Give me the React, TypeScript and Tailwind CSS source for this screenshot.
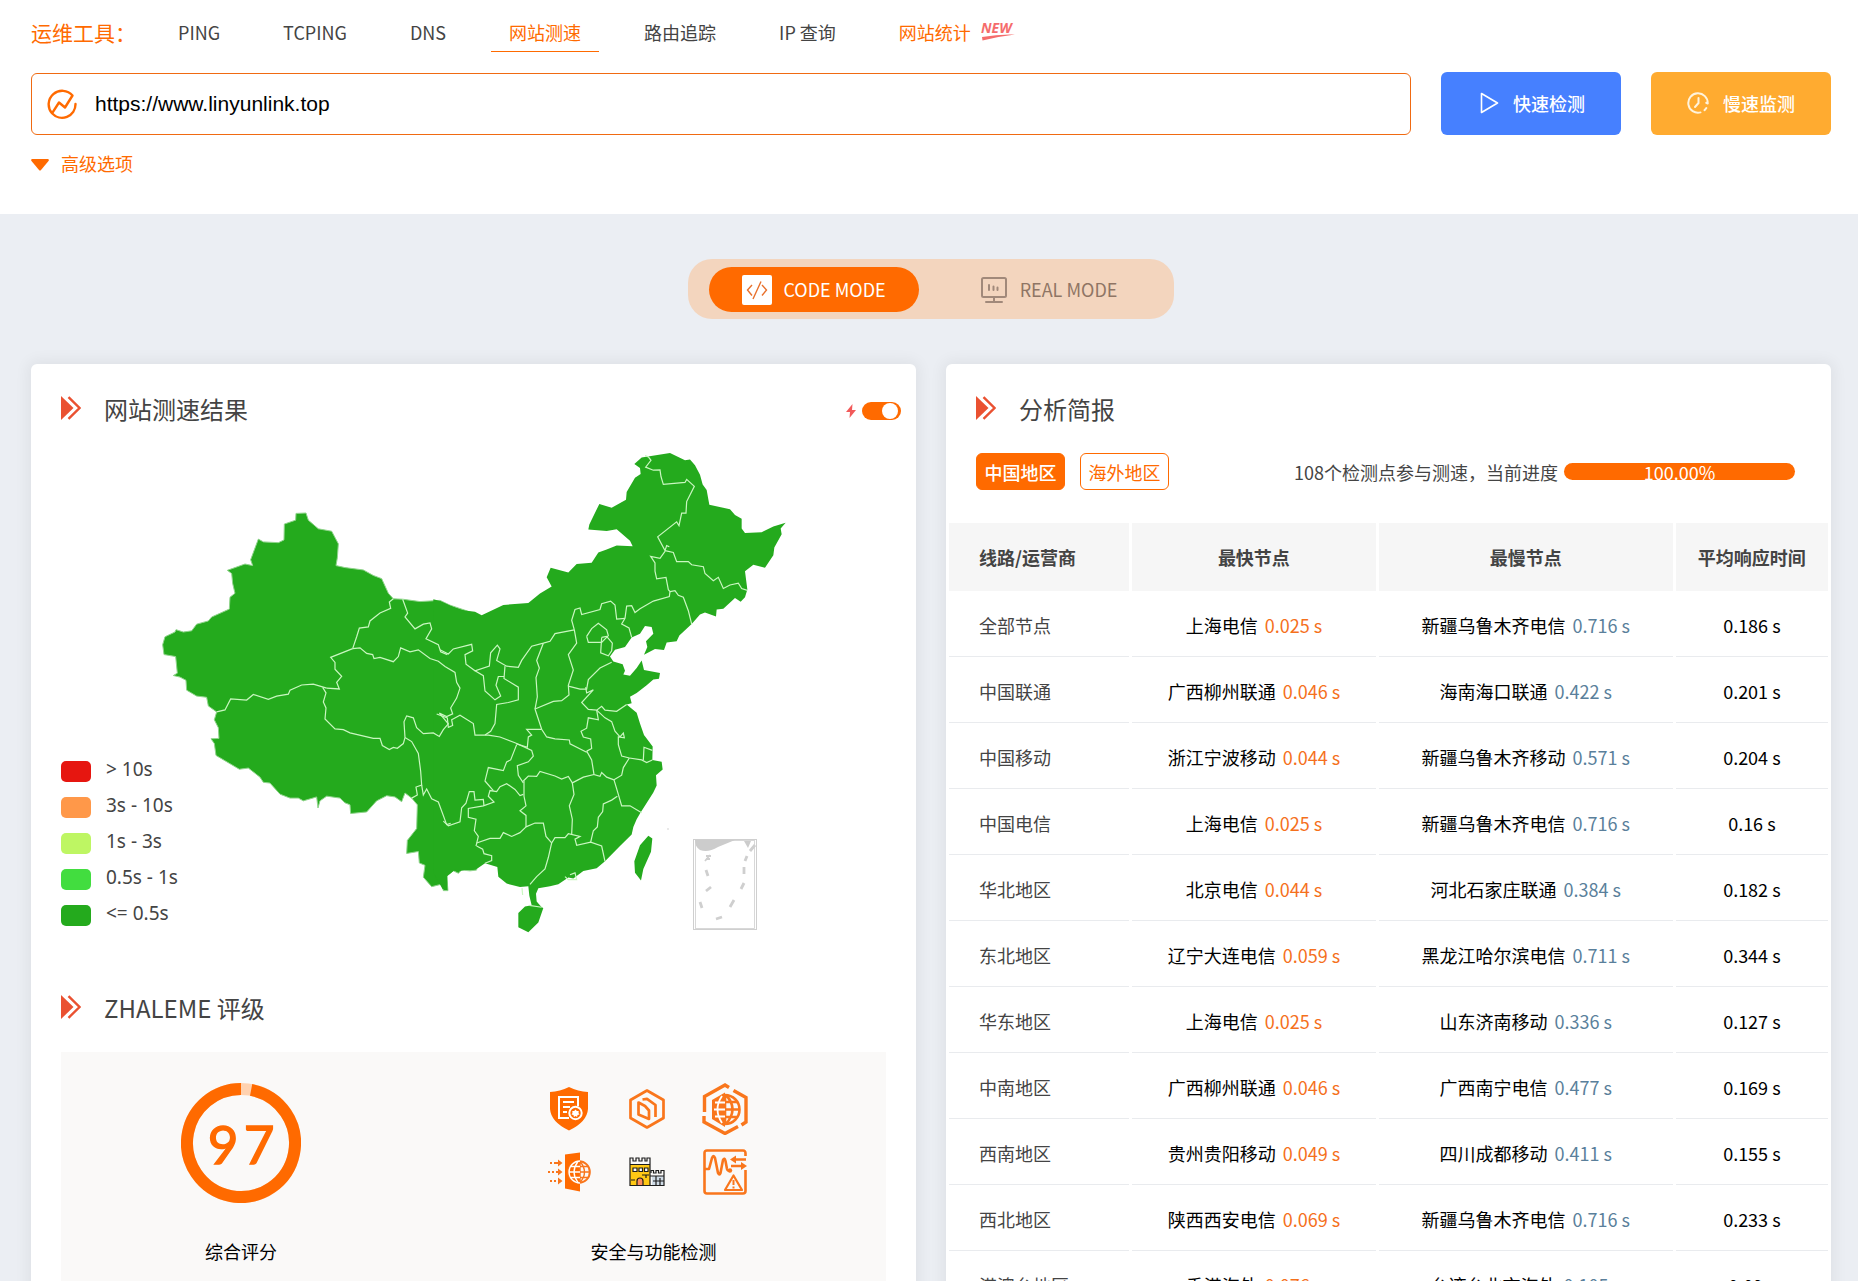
import React, { useState } from 'react';

interface NavItem {
  label: string;
  active?: boolean;
  hot?: boolean;
}

interface ReportRow {
  line: string;
  fast: string;
  fastTime: string;
  slow: string;
  slowTime: string;
  avg: string;
}

const NAV_ITEMS: NavItem[] = [
  { label: 'PING' },
  { label: 'TCPING' },
  { label: 'DNS' },
  { label: '网站测速', active: true },
  { label: '路由追踪' },
  { label: 'IP 查询' },
  { label: '网站统计', hot: true },
];

const LEGEND = [
  { label: '> 10s', color: 'bg-[#e61610]' },
  { label: '3s - 10s', color: 'bg-[#ff9849]' },
  { label: '1s - 3s', color: 'bg-[#bef663]' },
  { label: '0.5s - 1s', color: 'bg-[#42dd3f]' },
  { label: '<= 0.5s', color: 'bg-[#24aa1d]' },
];

const ROWS: ReportRow[] = [
  { line: '全部节点', fast: '上海电信', fastTime: '0.025 s', slow: '新疆乌鲁木齐电信', slowTime: '0.716 s', avg: '0.186 s' },
  { line: '中国联通', fast: '广西柳州联通', fastTime: '0.046 s', slow: '海南海口联通', slowTime: '0.422 s', avg: '0.201 s' },
  { line: '中国移动', fast: '浙江宁波移动', fastTime: '0.044 s', slow: '新疆乌鲁木齐移动', slowTime: '0.571 s', avg: '0.204 s' },
  { line: '中国电信', fast: '上海电信', fastTime: '0.025 s', slow: '新疆乌鲁木齐电信', slowTime: '0.716 s', avg: '0.16 s' },
  { line: '华北地区', fast: '北京电信', fastTime: '0.044 s', slow: '河北石家庄联通', slowTime: '0.384 s', avg: '0.182 s' },
  { line: '东北地区', fast: '辽宁大连电信', fastTime: '0.059 s', slow: '黑龙江哈尔滨电信', slowTime: '0.711 s', avg: '0.344 s' },
  { line: '华东地区', fast: '上海电信', fastTime: '0.025 s', slow: '山东济南移动', slowTime: '0.336 s', avg: '0.127 s' },
  { line: '中南地区', fast: '广西柳州联通', fastTime: '0.046 s', slow: '广西南宁电信', slowTime: '0.477 s', avg: '0.169 s' },
  { line: '西南地区', fast: '贵州贵阳移动', fastTime: '0.049 s', slow: '四川成都移动', slowTime: '0.411 s', avg: '0.155 s' },
  { line: '西北地区', fast: '陕西西安电信', fastTime: '0.069 s', slow: '新疆乌鲁木齐电信', slowTime: '0.716 s', avg: '0.233 s' },
  { line: '港澳台地区', fast: '香港海外', fastTime: '0.076 s', slow: '台湾台北市海外', slowTime: '0.105 s', avg: '0.09 s' },
];

// Province borders, split in a western and an eastern sheet
const WEST_LAND =
  '398,720 405,700 435,688 438,682 460,688 485,685 500,668 535,660 545,650 598,630 600,600 615,590 608,565 605,540 592,532 645,516 668,520 662,505 685,453 700,460 745,462 762,455 763,415 797,405 798,388 828,387 835,405 865,427 905,433 925,465 922,500 918,520 945,525 1000,531 1030,545 1055,553 1075,590 1090,604 1118,605 1170,611 1230,608 1260,620 1330,640 1340,1290 1320,1292 1295,1290 1285,1298 1270,1292 1250,1305 1254,1342 1240,1342 1238,1325 1205,1332 1180,1308 1185,1278 1168,1272 1165,1243 1130,1248 1132,1215 1160,1185 1162,1125 1145,1108 1125,1095 1115,1117 1095,1105 1070,1102 1040,1115 1010,1143 962,1147 960,1125 945,1120 930,1108 890,1103 870,1115 864,1133 860,1105 820,1115 805,1108 780,1108 750,1098 720,1070 700,1068 690,1055 655,1032 628,1035 558,1000 553,970 543,958 567,957 565,930 553,910 560,890 535,875 530,853 500,850 470,835 468,810 450,802 430,798 442,792 437,750 402,745';

const WEST_BORDERS = [
  '1090,604 1078,612 1082,628 1050,640 1020,660 1015,675 988,678 980,700 968,730',
  '968,730 902,752 915,765 915,782 935,800 920,815 928,832 890,830',
  '890,830 850,820 815,822 780,835 775,845 740,850 715,858 670,846 650,860 602,857 585,885 560,890',
  '878,828 888,842 880,865 888,880 885,908 915,933 940,935 960,943 1030,957 1050,957 1057,975 1078,985 1090,980 1102,982 1120,970 1125,955',
  '968,730 990,728 1010,742 1028,745 1032,755 1050,752 1090,763 1105,750 1112,728 1140,738 1165,733 1200,755 1225,762 1245,775 1275,790 1280,815 1290,830 1280,855 1262,880 1268,895 1250,902 1228,893 1255,920 1240,935 1228,952 1210,943 1180,945 1160,930 1150,905 1130,900 1122,915 1125,955',
  '1125,955 1145,965 1165,995 1172,1040 1175,1075 1158,1080 1162,1100 1145,1108',
  '1175,1075 1180,1100 1190,1085 1205,1110 1225,1118 1250,1175 1262,1172',
  '1118,605 1133,640 1125,650 1155,680 1180,668 1200,665 1205,680 1188,705 1225,720 1232,738 1252,745',
];

const EAST_LAND =
  '-20,625 0,630 60,653 105,658 125,667 190,640 265,635 300,610 335,592 320,568 332,543 385,555 410,533 455,530 475,503 500,495 530,485 578,487 570,472 530,442 500,447 445,443 448,430 478,376 515,386 558,365 560,345 585,308 602,298 600,282 583,272 605,255 690,243 735,262 750,260 765,275 780,300 788,325 800,340 808,378 870,390 885,405 905,415 905,440 915,452 965,450 1000,435 1037,425 1022,440 1025,455 1003,490 1000,510 975,543 940,535 915,552 922,600 915,620 902,632 885,622 850,650 830,652 828,670 795,660 780,665 755,690 718,720 710,735 680,738 672,758 645,755 612,770 622,750 618,735 640,715 635,698 615,695 600,715 575,725 555,750 525,757 510,775 520,788 548,795 555,812 550,822 570,825 590,805 605,785 612,810 660,818 657,833 640,835 620,850 590,870 570,880 575,897 560,900 590,922 600,950 612,980 638,1010 637,1045 665,1050 668,1070 648,1085 650,1112 640,1130 600,1185 590,1200 580,1220 575,1240 540,1270 495,1310 470,1328 430,1335 400,1355 385,1352 355,1370 330,1375 295,1380 288,1395 290,1415 305,1430 310,1432 295,1470 265,1495 235,1482 235,1445 255,1428 275,1425 268,1400 265,1375 240,1377 200,1368 175,1350 172,1325 135,1315 110,1330 95,1328 60,1335 45,1332 22,1348 22,1385 8,1383 -20,1340';

const EAST_BORDERS = [
  '615,250 625,253 633,262 617,280 640,288 660,287 663,305 670,325 735,320 740,312 763,330 740,370 738,400 725,400 717,433 710,423 653,462 675,498 680,485 688,488',
  '675,498 700,503 710,527 745,527 755,535 790,540 795,558 820,577 835,568 850,597 870,588 895,583 905,597 922,602',
  '675,500 660,518 632,513 645,530 645,552 650,572 678,568 685,600 690,605',
  '690,605 705,603 715,615 730,620 745,655 755,690',
  '690,605 688,618 640,630 600,650 585,660 575,642 560,643 555,675 545,690 567,700 575,725',
  '555,675 530,677 525,640 512,630 485,637 480,652 425,665 420,648 405,652 395,680 403,705',
  '0,757 25,768 40,755 95,743 98,760 75,770 78,795 105,812 148,800 152,765 172,745 180,755 170,785 200,800 235,803 245,785 275,748 310,740 330,735 345,715 403,705',
  '440,722 455,702 475,688 500,705 505,720 485,738 445,738 440,722',
  '485,725 500,722 517,740 515,760 505,773 482,765 485,725',
  '310,740 290,785 298,805 288,830 292,880 285,912',
  '403,705 410,740 385,770 400,810 385,850 387,875 365,890 340,892 285,912',
  '385,852 420,860 440,860 445,835 480,805 515,790',
  '437,855 440,870 460,862 425,895 445,913 470,915 485,905 495,915 530,918 560,900',
  '285,912 305,965 320,985 345,990 388,993 390,1003 440,1025',
  '470,915 475,940 445,935 440,962 423,970 430,985 452,990 455,1015 440,1022',
  '470,915 495,935 515,945 525,970 540,985 550,975 553,987 535,985 535,1005 545,1035 568,1040',
  '568,1040 605,1045 620,1052 637,1045',
  '610,1045 612,1012 637,1020',
  '568,1040 550,1065 545,1085 522,1097',
  '440,1022 455,1045 462,1083 480,1088 485,1078 500,1090 522,1097',
  '522,1097 535,1135 545,1165 570,1165 605,1183',
  '532,1140 515,1150 490,1160 488,1180 475,1195 472,1220 460,1230 452,1260',
  '250,1100 265,1087 290,1088 300,1075 345,1087 365,1095 385,1088 397,1105 430,1090 462,1083',
  '397,1105 402,1135 388,1165 397,1200 395,1240',
  '335,1262 345,1248 375,1248 385,1238 420,1245 405,1252 410,1268 452,1260 485,1270 495,1310',
  '335,1262 325,1300 315,1330 290,1350 270,1370',
  '258,1220 285,1210 310,1210 318,1245 335,1262',
  '252,1100 252,1140 258,1165 240,1178 258,1190 258,1220',
  '258,1220 240,1235 215,1245 190,1235 180,1250 150,1250 110,1262',
  '108,1270 115,1245 103,1230 108,1200 85,1195 85,1172 130,1165 162,1155 145,1140 150,1125 170,1128 180,1115 200,1107 225,1122 240,1138 250,1135',
  '110,1270 128,1278 132,1290 155,1295 155,1308 135,1315',
  '160,1125 135,1100 145,1065 190,1073 200,1050 212,1045 230,1005',
  '225,1000 275,1020 280,1035 265,1050 232,1060 235,1085 250,1105',
  '230,1003 262,1012 265,985 275,980 260,965 305,965',
  '-10,925 22,935 25,960 38,955 35,940 60,928 100,950 105,980 145,980 180,985 225,1000',
  '135,980 152,970 165,950 170,900 205,895 235,888 235,855 192,832 195,800',
  '105,812 130,825 135,865 165,888 182,878 168,850 175,827 192,827',
  '10,1205 25,1217 60,1207 65,1170 78,1158 88,1128 102,1128 105,1150 130,1148 132,1165',
  '375,1350 385,1358 410,1358 405,1340 390,1345',
  '246,1380 248,1398',
];

const ArrowIcon: React.FC = () => (
  <svg className="w-5 h-6 shrink-0" viewBox="0 0 20 24" aria-hidden="true">
    <path d="M0 0 L12.5 12 L0 24 Z" fill="#ea5131" />
    <path d="M7.5 1.2 L18.5 12 L7.5 22.8" fill="none" stroke="#ea5131" strokeWidth="2.4" />
  </svg>
);

const SectionTitle: React.FC<{ children: React.ReactNode }> = ({ children }) => (
  <div className="flex items-start gap-[23px] h-9">
    <div className="pt-1">
      <ArrowIcon />
    </div>
    <h2 className="text-2xl leading-[34px] text-[#444]">{children}</h2>
  </div>
);

const NewBadge: React.FC = () => (
  <svg className="w-9 h-5 mb-1 overflow-visible" viewBox="0 0 36 20" role="img" aria-label="NEW">
    <text x="0" y="12" fontFamily="Open Sans, sans-serif" fontSize="14" fontWeight="700" fontStyle="italic" fill="#f56c6c">NEW</text>
    <path d="M1 16 Q18 13 34 13.6 Q18 15.5 1.5 19.5 Z" fill="#f56c6c" />
  </svg>
);

const ChinaMap: React.FC = () => (
  <svg className="block w-full" viewBox="31 440 885 500" role="img" aria-label="中国地图">
    <g transform="translate(30 360) scale(0.33333 0.3954)" fill="#24aa1d">
      <polygon points={WEST_LAND} stroke="#8fd48b" strokeWidth="1" vectorEffect="non-scaling-stroke" />
    </g>
    <g transform="translate(440 360) scale(0.33333 0.3827)" fill="#24aa1d">
      <polygon points={EAST_LAND} />
      <polygon points="625,1243 637,1250 633,1285 610,1330 603,1360 585,1340 583,1310 600,1268" />
      <g fill="none" stroke="#c9f7c0" strokeWidth="1.2">
        {EAST_BORDERS.map((b) => (
          <polyline key={b} points={b} vectorEffect="non-scaling-stroke" />
        ))}
        <path d="M268 1425 L305 1430" vectorEffect="non-scaling-stroke" />
      </g>
    </g>
    <g transform="translate(30 360) scale(0.33333 0.3954)" fill="none" stroke="#c9f7c0" strokeWidth="1.2">
      {WEST_BORDERS.map((b) => (
        <polyline key={b} points={b} vectorEffect="non-scaling-stroke" />
      ))}
    </g>
    <circle cx="668" cy="829" r="0.8" fill="#ccc" />
    {/* South China Sea inset */}
    <g fill="none" stroke="#cfcfcf">
      <rect x="693.5" y="839.5" width="63" height="90" />
      <rect x="695.5" y="840.5" width="59" height="88" strokeWidth="0.8" />
      <path d="M695 840 H735 L718 847 Q708 853 700 850 Q695 847 695 840 Z M744 841 h7 l-3 7 z" fill="#cccccc" stroke="none" />
      <path d="M705 861 l5 -6 m-4 1 l5 0 m-5 3 l4 0" strokeWidth="1.8" />
      <path d="M755 845 l-5 6 M747 856 l-2 5 M744 867 v7 M744 883 l-3 6 M734 900 l-4 7 M722 917 l-6 2 M702 908 l-2 -6 M706 891 l5 -4 M706 870 l2 6" strokeWidth="2.8" />
    </g>
  </svg>
);

const ShieldIcon: React.FC = () => (
  <svg className="w-10 h-11" viewBox="0 0 40 44" aria-hidden="true">
    <path d="M20 0 Q29 4.5 39 5 L39 22 Q38 35 20 43.5 Q2 35 1 22 L1 5 Q11 4.5 20 0 Z" fill="#ff6a00" />
    <g fill="none" stroke="#fff" strokeWidth="2">
      <path d="M20 31 H10 V10 H29 V19" />
      <path d="M14 15 H25 M14 20 H21 M14 25 H18" />
      <circle cx="26.5" cy="26" r="6.2" fill="#ff6a00" />
    </g>
    <path d="M26.5 22.5 l1.3 1.4 1.9 .1 -.2 2 1 1.6 -2 .4 -.4 2 -1.600 -1 -1.600 1 -.4 -2 -2 -.4 1 -1.600 -.2 -2 1.900 -.1 z" fill="#fff" />
  </svg>
);

const HexIcon: React.FC = () => (
  <svg className="w-9 h-10" viewBox="0 0 36 40" fill="none" stroke="#f9761c" strokeWidth="2.7" strokeLinejoin="round" aria-hidden="true">
    <path d="M18 1.5 L34.5 11 V29 L18 38.5 L1.5 29 V11 Z" />
    <path d="M9.5 13.5 L16 17 L20 21.5 V30 L9.5 25.5 Z" />
    <path d="M13.5 10.5 L18 9.8 L26.5 16 V28" />
  </svg>
);

const GlobeHexIcon: React.FC = () => (
  <svg className="w-[46px] h-[52px]" viewBox="0 0 46 52" fill="none" stroke="#f9761c" aria-hidden="true">
    <path d="M27 4.5 L23 2 L2.5 13.5 V29 M31.5 7.5 L44 14.5 V39 L39.5 42 M2 33 V39 L23 50.5 L36 43.5" strokeWidth="3.4" />
    <path d="M23 9.5 L10 17 V36 L23 44 Z" fill="#f9761c" stroke="none" />
    <path d="M23 12 A14.5 14.5 0 0 1 23 41" strokeWidth="2.6" />
    <path d="M23 12 V41 M23 26.5 H37 M23 19 H35 M23 34 H35 M24 12 Q37 26 24 41" strokeWidth="2.6" />
    <path d="M12 26.5 H23 M13 19.5 H23 M13 33.5 H23 M20 13 Q11 26 20 40" stroke="#fff" strokeWidth="1.8" />
  </svg>
);

const DoorGlobeIcon: React.FC = () => (
  <svg className="w-11 h-10" viewBox="0 0 44 40" fill="none" stroke="#f9761c" aria-hidden="true">
    <path d="M18 2.5 L33 .5 V39.5 L18 36.5 Z" fill="#ff6a00" stroke="none" />
    <circle cx="32" cy="20" r="10.8" strokeWidth="2" />
    <path d="M33 9.5 V30.5 M33 20 H43 M33 14.5 H41 M33 25.5 H41 M33 9.5 Q42 20 33 30.5" strokeWidth="1.4" />
    <path d="M33 9 A11 11 0 0 0 33 31 M21.5 20 H33 M23.5 14.5 H33 M23.5 25.5 H33 M31 9.5 Q23 20 31 30.5" stroke="#fff" strokeWidth="1.3" />
    <path d="M3 11 h2 m2 0 h6 M1 20 h2 m2 0 h2 m2 0 h4 M3 29 h2 m2 0 h2 m2 0 h2" strokeWidth="2" />
    <path d="M11 7.5 l4.5 3.5 -4.5 3.500 z M11 16.500 l4.500 3.500 -4.500 3.500 z M11 25.500 l4.500 3.500 -4.500 3.500 z" fill="#f9761c" stroke="none" />
  </svg>
);

const CastleIcon: React.FC = () => (
  <svg className="w-9 h-[30px]" viewBox="0 0 36 30" fill="none" stroke="#1d1d1d" strokeWidth="1.2" aria-hidden="true">
    <path d="M1 8 H21 V28.5 H1 Z" fill="#ffc814" stroke="none" />
    <path d="M1 28.5 V1 H4 V4 H7 V1 H10 V4 H13 V1 H16 V4 H18 V1 H21 V28.5 Z M1 7.5 H21" />
    <path d="M4 11 h4 v3.5 h-4 z M10 11 h3.5 v3.5 h-3.5 z M15.5 11 h3.5 v3.5 h-3.5 z" fill="#fff" />
    <path d="M8 28.5 V24 Q8 21 11 21 Q14 21 14 24 V28.5 Z" fill="#ff8d5c" />
    <path d="M23 19 H35 V28.5 H23 Z" fill="#cfdbe6" stroke="none" />
    <path d="M21 28.5 H35 V13.5 H32 V16 H29.5 V13.5 H27 V16 H24.5 V13.5 H22 V16 M21 19 H35 M24 24 H35 M27 19 V28 M31 21 V28 M2 23 h4 M13 18 h7 M17 18 v3" />
  </svg>
);

const MonitorAlertIcon: React.FC = () => (
  <svg className="w-11 h-[46px]" viewBox="0 0 44 46" fill="none" stroke="#f9761c" strokeWidth="2.6" aria-hidden="true">
    <path d="M42.5 7 V4.5 Q42.5 1.5 40 1.5 H4 Q1.5 1.5 1.5 4 V42 Q1.5 44.5 4 44.5 H40 Q42.5 44.5 42.5 42 V21" />
    <path d="M2 20 H6 L9 9 Q10.5 5 12 9 L15 24 Q16.500 27 17.500 24 L20 11 Q21.500 8 22.500 12 L24 20 Q24.500 22 27 22" strokeLinejoin="round" />
    <circle cx="27" cy="21.5" r="2.2" fill="#f9761c" stroke="none" />
    <path d="M43 10.5 H30 M28 17 H41" />
    <path d="M33 6.5 L27 10.5 L33 14.5 Z M38 13 L44 17 L38 21 Z" fill="#f9761c" stroke="none" />
    <path d="M30.5 26.5 L39 41 H22 Z" strokeWidth="2.2" strokeLinejoin="round" />
    <path d="M30.5 31 V36 M30.5 37.5 V39.5" strokeWidth="2" />
  </svg>
);

const SECURITY_ICONS = [ShieldIcon, HexIcon, GlobeHexIcon, DoorGlobeIcon, CastleIcon, MonitorAlertIcon];

const ScoreRing: React.FC<{ score: number }> = ({ score }) => (
  <svg className="w-[120px] h-[120px]" viewBox="0 0 120 120" role="img" aria-label={`${score}`}>
    <circle cx="60" cy="60" r="54" fill="none" stroke="#ffd2b0" strokeWidth="12" />
    <circle
      cx="60"
      cy="60"
      r="54"
      fill="none"
      stroke="#ff6a00"
      strokeWidth="12"
      pathLength="100"
      strokeDasharray={`${score} ${100 - score}`}
      transform={`rotate(${-90 + (100 - score) * 3.6} 60 60)`}
    />
    <text y="81" textAnchor="middle" fontFamily="Lato, sans-serif" fontSize="53" fill="#ff6a00" stroke="#ff6a00" strokeWidth="1.4">
      <tspan x="42">{`${score}`[0]}</tspan>
      <tspan x="78">{`${score}`[1]}</tspan>
    </text>
  </svg>
);

const Header: React.FC = () => {
  const [url, setUrl] = useState('https://www.linyunlink.top');

  return (
    <header className="bg-white pl-[31px] pr-[27px] pt-[15px] pb-9">
      <nav className="flex items-start h-[37px] text-lg">
        <span className="text-[21px] leading-[34px] text-[#ff6a00] w-[129px]">运维工具：</span>
        <div className="flex gap-[27px]">
          {NAV_ITEMS.map((item) => (
            <a
              key={item.label}
              href="#"
              className={`flex items-start gap-[10px] h-[37px] px-[18px] border-b leading-[34px] whitespace-nowrap ${
                item.active ? 'border-[#ff6a00]' : 'border-transparent'
              } ${item.active || item.hot ? 'text-[#ff6a00]' : 'text-[#444]'}`}
            >
              {item.label}
              {item.hot && (
                <span className="pt-[6px]">
                  <NewBadge />
                </span>
              )}
            </a>
          ))}
        </div>
      </nav>

      <div className="flex items-end gap-[30px] mt-5">
        <div className="flex-1 flex items-center h-[62px] border border-[#f06a12] rounded-md pl-[15px]">
          <svg className="w-[30px] h-[30px]" viewBox="0 0 30 30" fill="none" stroke="#ff6a00" strokeWidth="2.4" strokeLinecap="round" strokeLinejoin="round" aria-hidden="true">
            <path d="M28.5 15 A13.5 13.5 0 0 1 5 24.3 L12 13.5 L18 18.5 L25.5 6.5 A13.5 13.5 0 1 0 5 24.3" />
          </svg>
          <input
            type="text"
            aria-label="网址"
            value={url}
            onChange={(e) => setUrl(e.target.value)}
            className="flex-1 h-full px-[18px] text-[21px] text-black font-['Liberation_Sans',sans-serif] outline-none"
          />
        </div>
        <button type="button" className="flex items-center justify-center gap-[14px] w-[180px] h-[63px] pb-px pl-[3px] rounded-md bg-[#4680ff] text-white text-lg font-medium">
          <svg className="w-[19px] h-[22px]" viewBox="0 0 19 22" fill="none" stroke="#fff" strokeWidth="1.6" strokeLinejoin="round" aria-hidden="true">
            <path d="M1.500 1.500 L17.500 11 L1.500 20.500 Z" />
          </svg>
          快速检测
        </button>
        <button type="button" className="flex items-center justify-center gap-[14px] w-[180px] h-[63px] pb-px rounded-md bg-[#ffab30] text-white text-lg font-medium">
          <svg className="w-[22px] h-[22px]" viewBox="0 0 22 22" fill="none" stroke="#fff3dc" strokeWidth="2" strokeLinecap="round" aria-hidden="true">
            <path d="M20.700 11.500 A9.700 9.700 0 1 0 13.500 20.400 M20.700 11.500 L19.300 10.800 M19.300 16 A9.700 9.700 0 0 1 17.500 18.200" />
            <path d="M11.500 6 V11 L8 15" />
          </svg>
          慢速监测
        </button>
      </div>

      <button type="button" className="flex items-start gap-3 h-[27px] mt-4 text-lg leading-[25px] text-[#ff6a00]">
        <span className="pt-2">
          <svg className="w-[18px] h-3" viewBox="0 0 18 12" fill="#ff6a00" aria-hidden="true">
            <path d="M1 0 H17 Q18.5 .5 17.5 2 L10 11 Q9 12 8 11 L.5 2 Q-.5 .5 1 0 Z" />
          </svg>
        </span>
        高级选项
      </button>
    </header>
  );
};

const ModeSwitch: React.FC = () => (
  <div className="flex justify-between w-[486px] h-[60px] mx-auto px-[21px] pt-2 rounded-[24px] bg-[#f3d5be] text-lg">
    <button type="button" className="flex items-center justify-center gap-[11px] w-[210px] h-[45px] rounded-full bg-[#ff6a00] text-white">
      <svg className="w-[30px] h-[30px]" viewBox="0 0 30 30" fill="none" stroke="#e8702c" strokeWidth="1.4" aria-hidden="true">
        <rect width="30" height="30" rx="2" fill="#fff" stroke="none" />
        <path d="M10 10 L5.500 15 L10 20.500 M20 10 L24.500 15 L20 20.500 M19 6.500 L11 24" />
      </svg>
      <span className="pb-[2px]">CODE MODE</span>
    </button>
    <button type="button" className="flex items-center justify-center gap-[11px] w-[210px] h-[45px] text-[#8f7565]">
      <svg className="w-[30px] h-[30px]" viewBox="0 0 30 30" fill="none" stroke="#a1897a" strokeWidth="2" strokeLinecap="round" aria-hidden="true">
        <rect x="3" y="3" width="24" height="19" rx="1.500" />
        <path d="M10 10 V15 M14.500 11.500 V15 M18.500 12.500 V15 M15 22.500 V27 M7 27 H23" />
      </svg>
      <span className="pb-[2px]">REAL MODE</span>
    </button>
  </div>
);

const ResultCard: React.FC = () => {
  const [fastMode, setFastMode] = useState(true);

  return (
    <section className="bg-white rounded-md shadow-[0_0_14px_4px_rgba(0,0,0,0.05)] pt-7">
      <div className="flex items-center justify-between pl-[30px] pr-[15px]">
        <SectionTitle>网站测速结果</SectionTitle>
        <label className="flex items-center gap-[6px] pt-[2px]">
          <svg className="w-[10px] h-[14px]" viewBox="0 0 10 14" fill="#f25a5a" aria-hidden="true">
            <path d="M6.5 0 L0 8 H4 L3.5 14 L10 6 H6 Z" />
          </svg>
          <input
            type="checkbox"
            className="peer sr-only"
            aria-label="极速模式"
            checked={fastMode}
            onChange={(e) => setFastMode(e.target.checked)}
          />
          <span className="flex items-center justify-start w-[39px] h-[18px] px-[3px] rounded-full bg-gray-300 peer-checked:justify-end peer-checked:bg-[#ff6a00]">
            <span className="w-4 h-4 rounded-full bg-white"></span>
          </span>
        </label>
      </div>

      <div className="relative mt-3">
        <ChinaMap />
        <ul className="absolute left-[30px] bottom-[7px]">
          {LEGEND.map((item) => (
            <li key={item.label} className="flex items-center h-9">
              <span className={`w-[30px] h-[21px] rounded-[5px] ${item.color}`}></span>
              <span className="pl-[15px] pb-1 text-[19px] leading-7 text-[#444] font-['Noto_Sans',sans-serif]">{item.label}</span>
            </li>
          ))}
        </ul>
      </div>

      <div className="px-[30px] mt-[51px]">
        <SectionTitle>ZHALEME 评级</SectionTitle>
        <div className="grid grid-cols-[360fr_465fr] mt-[25px] bg-[#faf9f8] pt-[31px] pb-12 text-lg text-black">
          <div className="flex flex-col items-center">
            <div className="h-[154px]">
              <ScoreRing score={97} />
            </div>
            <span className="leading-7">综合评分</span>
          </div>
          <div className="flex flex-col items-center">
            <div className="h-[154px] pr-[14px]">
              <div className="grid grid-cols-[78px_78px_78px] gap-y-[11px]">
                {SECURITY_ICONS.map((Icon, i) => (
                  <div key={i} className="flex items-center justify-center h-[52px]">
                    <Icon />
                  </div>
                ))}
              </div>
            </div>
            <span className="leading-7">安全与功能检测</span>
          </div>
        </div>
      </div>
    </section>
  );
};

const ReportCard: React.FC = () => (
  <section className="bg-white rounded-md shadow-[0_0_14px_4px_rgba(0,0,0,0.05)] pt-7 text-lg">
    <div className="px-[30px]">
      <SectionTitle>分析简报</SectionTitle>
    </div>

    <div className="flex items-center justify-between pl-[30px] pr-9 mt-[25px]">
      <div className="flex gap-[15px]">
        <button type="button" className="w-[89px] h-[37px] rounded-md border border-[#ff6a00] bg-[#ff6a00] text-white font-medium">
          中国地区
        </button>
        <button type="button" className="w-[89px] h-[37px] rounded-md border border-[#ff6a00] text-[#ff6a00]">
          海外地区
        </button>
      </div>
      <div className="flex items-center gap-[6px] text-[#444]">
        <span>108个检测点参与测速，当前进度</span>
        <div
          role="progressbar"
          aria-valuenow={100}
          aria-label="当前进度"
          className="w-[231px] h-[17px] rounded-full overflow-hidden bg-[#ff6a00] text-center text-white leading-[19px]"
        >
          100.00%
        </div>
      </div>
    </div>

    <table className="w-full table-fixed border-separate border-spacing-x-[3px] border-spacing-y-0 mt-[33px] text-center text-black">
      <thead>
        <tr className="h-[68px] text-[#444]">
          <th scope="col" className="w-[20.7%] pl-[30px] text-left bg-[#f6f6f6]">线路/运营商</th>
          <th scope="col" className="w-[28%] bg-[#f6f6f6]">最快节点</th>
          <th scope="col" className="w-[33.8%] bg-[#f6f6f6]">最慢节点</th>
          <th scope="col" className="w-[17.5%] bg-[#f6f6f6]">平均响应时间</th>
        </tr>
      </thead>
      <tbody>
        {ROWS.map((row) => (
          <tr key={row.line} className="h-[66px]">
            <td className="pl-[30px] pt-[3px] text-left text-[#444] border-b border-[#e9ebee]">{row.line}</td>
            <td className="pt-[3px] border-b border-[#e9ebee]">
              {row.fast}
              <span className="ml-[7px] text-[#f5701c]">{row.fastTime}</span>
            </td>
            <td className="pt-[3px] border-b border-[#e9ebee]">
              {row.slow}
              <span className="ml-[7px] text-[#5a7f9b]">{row.slowTime}</span>
            </td>
            <td className="pt-[3px] border-b border-[#e9ebee]">{row.avg}</td>
          </tr>
        ))}
      </tbody>
    </table>
  </section>
);

const App: React.FC = () => {
  return (
    <div className="h-screen overflow-hidden bg-[#ebeef3] font-['Noto_Sans_CJK_SC',sans-serif]">
      <Header />
      <main className="pl-[31px] pr-[27px] py-[45px]">
        <ModeSwitch />
        <div className="grid grid-cols-2 gap-[30px] items-start mt-[45px]">
          <ResultCard />
          <ReportCard />
        </div>
      </main>
    </div>
  );
};

export default App;
